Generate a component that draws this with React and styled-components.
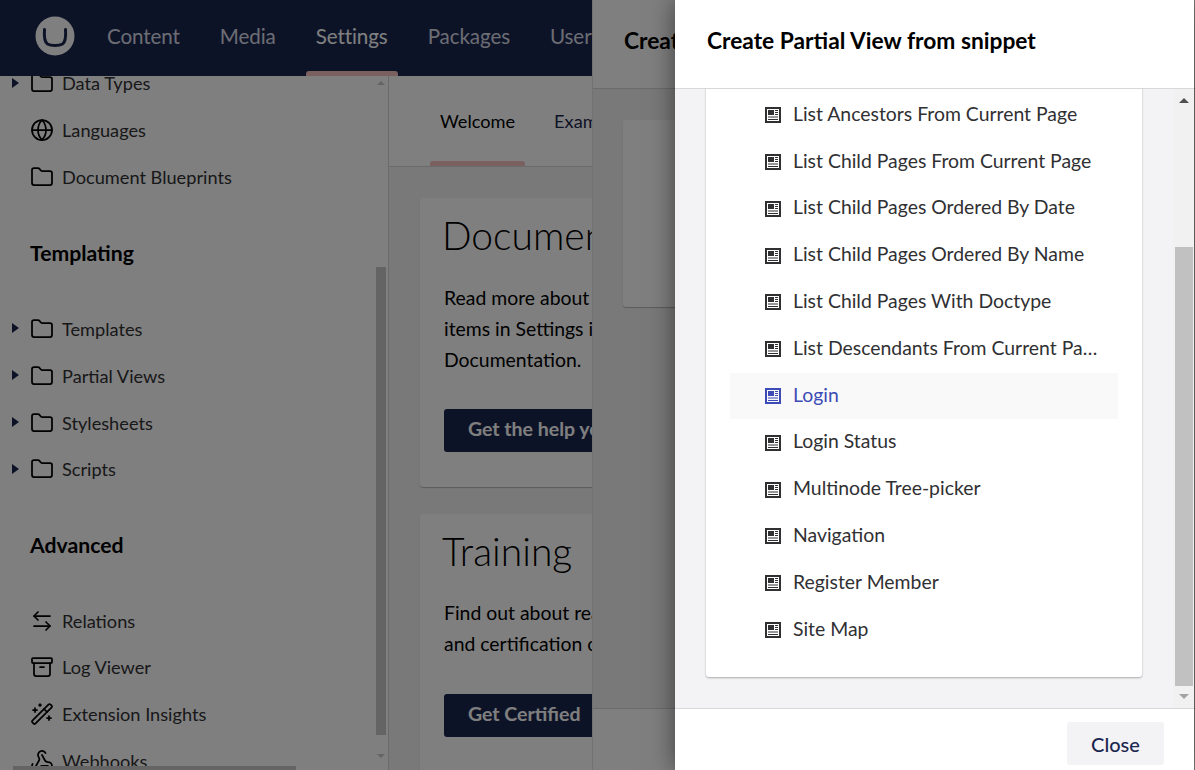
import React from 'react';
import styled, { createGlobalStyle } from 'styled-components';
import { Folder, Globe, ArrowLeftRight, Archive, WandSparkles, Webhook } from 'lucide-react';

const Global = createGlobalStyle`
  html, body { margin: 0; padding: 0; height: 100%; overflow: hidden; }
  body { font-family: Lato, "Noto Sans", sans-serif; color: #303033; background: #fff; }
  * { box-sizing: border-box; }
`;

const Screen = styled.div`
  position: relative;
  width: 1195px;
  height: 770px;
  overflow: hidden;
  display: flex;
  flex-direction: column;
`;
const Header = styled.header`
  height: 76px;
  flex: none;
  background: #1b264f;
  display: flex;
  align-items: stretch;
  padding-left: 35px;
  position: relative;
  z-index: 2;
`;
const LogoWrap = styled.div`
  width: 52px;
  display: flex;
  align-items: center;
  padding-bottom: 5px;
`;
const Nav = styled.nav`
  display: flex;
`;
const NavItem = styled.div`
  position: relative;
  padding: 0 20px 5px;
  display: flex;
  align-items: center;
  font-size: 20.6px;
  letter-spacing: -0.1px;
  white-space: nowrap;
  color: ${p => (p.$active ? '#fff' : '#d8dbe6')};
  ${p => p.$active && `
    &::after {
      content: '';
      position: absolute;
      left: 10px; right: 10px; bottom: 0;
      height: 5px;
      background: #f5c1bc;
      border-radius: 3px 3px 0 0;
    }
  `}
`;
const Columns = styled.div`
  flex: 1;
  display: flex;
  min-height: 0;
`;
const Sidebar = styled.aside`
  position: relative;
  width: 389px;
  flex: none;
  background: #fff;
  border-right: 1px solid #d8d7d9;
  display: flex;
  overflow: hidden;
`;
const TreeList = styled.div`
  flex: 1;
  margin-top: -16.4px;
`;
const TreeRow = styled.div`
  height: 46.8px;
  display: flex;
  align-items: center;
  font-size: 18.2px;
  white-space: nowrap;
  svg { flex: none; }
`;
const CaretSlot = styled.span`
  width: 30px;
  flex: none;
  display: flex;
  padding-left: 12px;
`;
const Caret = styled.i`
  width: 0;
  height: 0;
  margin-top: -1px;
  border-left: 7px solid #1b264f;
  border-top: 5px solid transparent;
  border-bottom: 5px solid transparent;
`;
const TreeLabel = styled.span`
  margin-left: 8px;
`;
const TreeHeading = styled.h3`
  margin: 0;
  height: ${p => p.$height}px;
  padding-left: 30px;
  display: flex;
  align-items: center;
  font-size: 21.2px;
  font-weight: 700;
  color: #000;
`;
const VTrack = styled.div`
  width: 14px;
  flex: none;
  display: flex;
  flex-direction: column;
  align-items: center;
`;
const SideThumb = styled.div`
  width: 10px;
  height: 468px;
  margin: 182px 0 19px;
  background: #c8c8c8;
`;
const Arrow = styled.i`
  display: block;
  flex: none;
  width: 0;
  height: 0;
  border-left: ${p => p.$size}px solid transparent;
  border-right: ${p => p.$size}px solid transparent;
  ${p => (p.$down ? 'border-top' : 'border-bottom')}: ${p => p.$h}px solid ${p => p.$color};
`;
const TopGap = styled.div`
  height: 5px;
  flex: none;
`;
const HThumb = styled.div`
  position: absolute;
  left: 13px;
  bottom: 0;
  width: 283px;
  height: 4px;
  background: #c8c8c8;
`;
const Main = styled.main`
  flex: 1;
  min-width: 0;
  background: #f3f3f5;
  display: flex;
  flex-direction: column;
`;
const TabBar = styled.div`
  height: 91px;
  flex: none;
  background: #fff;
  border-bottom: 1px solid #d8d7d9;
  display: flex;
  gap: 19px;
  padding-left: 41px;
`;
const Tab = styled.div`
  position: relative;
  padding: 0 10px 1px;
  display: flex;
  align-items: center;
  justify-content: center;
  font-size: 18.2px;
  color: ${p => (p.$active ? '#000' : '#1b264f')};
  ${p => p.$active && `
    &::after {
      content: '';
      position: absolute;
      left: 0; right: 0; bottom: 0;
      height: 5px;
      background: #f5c1bc;
      border-radius: 3px 3px 0 0;
    }
  `}
`;
const Dash = styled.div`
  padding: 31px 31px 0;
  display: flex;
  flex-direction: column;
  gap: 27px;
  width: 760px;
`;
const DashCard = styled.section`
  background: #fff;
  border-radius: 3px;
  box-shadow: 0 1px 1px rgba(0, 0, 0, 0.25);
  padding: 12px 24px 35.3px;
`;
const DashTitle = styled.h2`
  margin: 0 0 0 -2px;
  font-size: 39px;
  line-height: 50px;
  font-weight: 300;
  color: #000;
  white-space: nowrap;
`;
const DashText = styled.p`
  margin: 21.5px 0 34.2px;
  font-size: 19.4px;
  line-height: 31px;
  color: #000;
  white-space: nowrap;
`;
const DashButton = styled.div`
  display: inline-flex;
  align-items: center;
  height: 43px;
  padding: 0 24px 4px;
  border-radius: 3px;
  background: #1b264f;
  color: #fff;
  font-size: 19.5px;
  font-weight: 700;
  white-space: nowrap;
`;
const Layer = styled.div`
  position: absolute;
  top: 0;
  bottom: 0;
  right: ${p => p.$right || 0}px;
  left: ${p => p.$left}px;
  z-index: ${p => p.$z};
  display: flex;
  flex-direction: column;
  background: #fff;
  ${p => p.$shadow && 'box-shadow: 0 0 24px rgba(0, 0, 0, 0.5);'}
`;
const LayerEdge = styled.div`
  position: absolute;
  top: 0;
  bottom: 0;
  left: 0;
  width: 1px;
  background: #e4e4e6;
`;
const ModalHeader = styled.div`
  height: 89px;
  flex: none;
  background: #fff;
  border-bottom: 1px solid #d8d7d9;
  display: flex;
  align-items: center;
  padding: 0 0 7px 32px;
  font-size: 22.75px;
  font-weight: 700;
  color: #000;
  white-space: nowrap;
`;
const ModalBody = styled.div`
  flex: 1;
  min-height: 0;
  background: #f3f3f5;
  display: flex;
  overflow: hidden;
`;
const ModalFooter = styled.div`
  height: 62px;
  flex: none;
  background: #fff;
  border-top: 1px solid #d8d7d9;
  display: flex;
  align-items: center;
  justify-content: flex-end;
  padding: 8px 30px 0 0;
`;
const BodyScroll = styled.div`
  flex: 1;
  min-width: 0;
  padding: 0 31px;
`;
const UnderCard = styled.div`
  margin-top: 31px;
  height: 187px;
  background: #fff;
  border-radius: 3px;
  box-shadow: 0 1px 1px rgba(0, 0, 0, 0.25);
`;
const SnippetCard = styled.div`
  margin-top: -20px;
  padding: 22.9px 24px 23.3px;
  background: #fff;
  border-radius: 3px;
  box-shadow: 0 1px 2px rgba(0, 0, 0, 0.3);
`;
const SnippetRow = styled.div`
  height: 46.8px;
  padding: 0 19px 0 35px;
  display: flex;
  align-items: center;
  gap: 12px;
  font-size: 19.4px;
  color: ${p => (p.$hover ? '#3d4bb6' : '#303033')};
  background: ${p => (p.$hover ? '#f9f9f9' : 'transparent')};
  svg { flex: none; }
`;
const SnippetName = styled.span`
  flex: 1;
  min-width: 0;
  padding-bottom: 4px;
  overflow: hidden;
  white-space: nowrap;
  text-overflow: ellipsis;
`;
const ModalTrack = styled.div`
  width: 21px;
  flex: none;
  background: #f1f1f1;
  display: flex;
  flex-direction: column;
  align-items: center;
`;
const ModalThumb = styled.div`
  width: 18px;
  height: 439px;
  margin-top: 144px;
  margin-bottom: 8px;
  background: #c1c1c1;
`;
const TopArrowSpace = styled.div`
  height: 14px;
  padding-top: 9px;
  flex: none;
`;
const CloseButton = styled.div`
  width: 97px;
  height: 43px;
  border-radius: 3px;
  background: #f3f3f5;
  color: #1b264f;
  font-size: 20px;
  font-weight: 500;
  display: flex;
  align-items: center;
  justify-content: center;
`;
const Backdrop = styled.div`
  position: absolute;
  inset: 0;
  z-index: 3;
  background: rgba(0, 0, 0, 0.5);
`;

const Logo = () => (
  <svg width="40" height="40" viewBox="0 0 40 40">
    <circle cx="20" cy="20" r="19.5" fill="#fff" />
    <path d="M9.5 13.5 C9 20 9.5 26 12.5 28 C16 30 24 30 27.5 28 C30.5 26 31 20 30.5 13.5" fill="none" stroke="#1b264f" strokeWidth="3" strokeLinecap="round" />
  </svg>
);
const ArticleIcon = () => (
  <svg width="16" height="16" viewBox="0 0 16 16">
    <rect x="1" y="1" width="14" height="14" fill="none" stroke="currentColor" strokeWidth="2" />
    <rect x="3" y="3" width="6" height="5" fill="currentColor" />
    <path d="M10 3.5h3M10 5.5h3M10 7.5h3M3 10h10M3 12.5h10" stroke="currentColor" strokeWidth="1" />
  </svg>
);

const icon = { size: 24, strokeWidth: 1.75, color: '#000' };
const snippets = [
  'List Ancestors From Current Page', 'List Child Pages From Current Page', 'List Child Pages Ordered By Date',
  'List Child Pages Ordered By Name', 'List Child Pages With Doctype', 'List Descendants From Current Page',
  'Login', 'Login Status', 'Multinode Tree-picker', 'Navigation', 'Register Member', 'Site Map',
];

const Row = ({ caret, Icon, children }) => (
  <TreeRow>
    <CaretSlot>{caret && <Caret />}</CaretSlot>
    <Icon {...icon} />
    <TreeLabel>{children}</TreeLabel>
  </TreeRow>
);

export default function App() {
  return (
    <Screen>
      <Global />
      <Header>
        <LogoWrap><Logo /></LogoWrap>
        <Nav>
          <NavItem>Content</NavItem>
          <NavItem>Media</NavItem>
          <NavItem $active>Settings</NavItem>
          <NavItem>Packages</NavItem>
          <NavItem>Users</NavItem>
        </Nav>
      </Header>
      <Columns>
        <Sidebar>
          <TreeList>
            <Row caret Icon={Folder}>Data Types</Row>
            <Row Icon={Globe}>Languages</Row>
            <Row Icon={Folder}>Document Blueprints</Row>
            <TreeHeading $height={105.6}>Templating</TreeHeading>
            <Row caret Icon={Folder}>Templates</Row>
            <Row caret Icon={Folder}>Partial Views</Row>
            <Row caret Icon={Folder}>Stylesheets</Row>
            <Row caret Icon={Folder}>Scripts</Row>
            <TreeHeading $height={104.4}>Advanced</TreeHeading>
            <Row Icon={ArrowLeftRight}>Relations</Row>
            <Row Icon={Archive}>Log Viewer</Row>
            <Row Icon={WandSparkles}>Extension Insights</Row>
            <Row Icon={Webhook}>Webhooks</Row>
          </TreeList>
          <VTrack>
            <TopGap />
            <Arrow $size={4} $h={4} $color="#c8c8c8" />
            <SideThumb />
            <Arrow $down $size={4} $h={4} $color="#c8c8c8" />
          </VTrack>
          <HThumb />
        </Sidebar>
        <Main>
          <TabBar>
            <Tab $active>Welcome</Tab>
            <Tab>Examples</Tab>
          </TabBar>
          <Dash>
            <DashCard>
              <DashTitle>Documentation</DashTitle>
              <DashText>
                Read more about working with the<br />
                items in Settings in our<br />
                Documentation.
              </DashText>
              <DashButton>Get the help you need</DashButton>
            </DashCard>
            <DashCard>
              <DashTitle>Training</DashTitle>
              <DashText>
                Find out about real-life training<br />
                and certification opportunities
              </DashText>
              <DashButton>Get Certified</DashButton>
            </DashCard>
          </Dash>
        </Main>
      </Columns>
      <Layer $left={592} $z={2}>
        <ModalHeader>Create Partial View</ModalHeader>
        <ModalBody>
          <BodyScroll><UnderCard /></BodyScroll>
        </ModalBody>
        <ModalFooter />
        <LayerEdge />
      </Layer>
      <Backdrop />
      <Layer $left={675} $right={1} $z={4} $shadow>
        <ModalHeader>Create Partial View from snippet</ModalHeader>
        <ModalBody>
          <BodyScroll>
            <SnippetCard>
              {snippets.map(name => (
                <SnippetRow key={name} $hover={name === 'Login'}>
                  <ArticleIcon />
                  <SnippetName>{name}</SnippetName>
                </SnippetRow>
              ))}
            </SnippetCard>
          </BodyScroll>
          <ModalTrack>
            <TopArrowSpace><Arrow $size={5} $h={5} $color="#505050" /></TopArrowSpace>
            <ModalThumb />
            <Arrow $down $size={5} $h={5} $color="#a3a3a3" />
          </ModalTrack>
        </ModalBody>
        <ModalFooter>
          <CloseButton>Close</CloseButton>
        </ModalFooter>
      </Layer>
    </Screen>
  );
}
